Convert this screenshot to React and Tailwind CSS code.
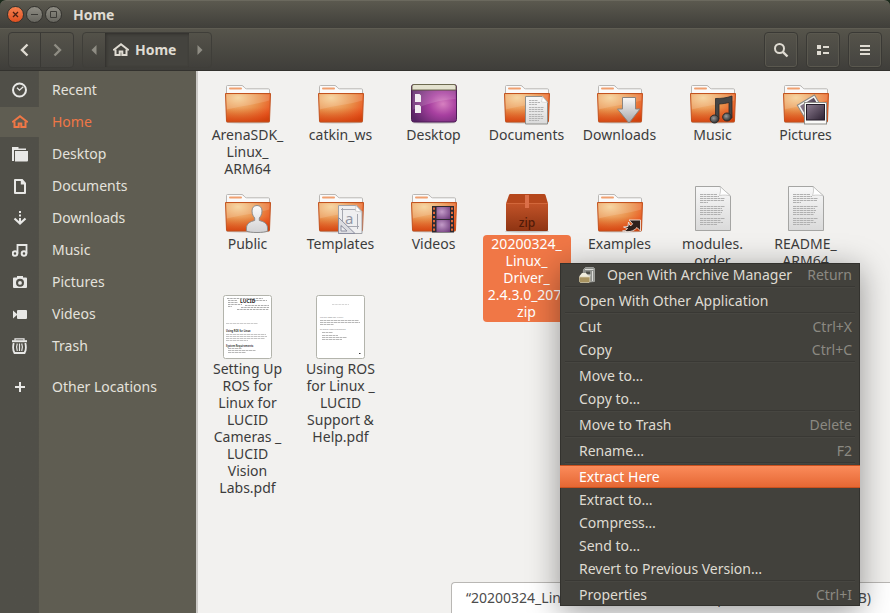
import { useState } from 'react';
import clsx from 'clsx';

const places = [
  { name: 'Recent', icon: 'recent' },
  { name: 'Home', icon: 'home' },
  { name: 'Desktop', icon: 'folder' },
  { name: 'Documents', icon: 'document' },
  { name: 'Downloads', icon: 'download' },
  { name: 'Music', icon: 'music' },
  { name: 'Pictures', icon: 'camera' },
  { name: 'Videos', icon: 'video' },
  { name: 'Trash', icon: 'trash' },
];

const files = [
  { lines: ['ArenaSDK_', 'Linux_', 'ARM64'], type: 'folder' },
  { lines: ['catkin_ws'], type: 'folder' },
  { lines: ['Desktop'], type: 'desktop' },
  { lines: ['Documents'], type: 'folder', emblem: 'document' },
  { lines: ['Downloads'], type: 'folder', emblem: 'download' },
  { lines: ['Music'], type: 'folder', emblem: 'music' },
  { lines: ['Pictures'], type: 'folder', emblem: 'pictures' },
  { lines: ['Public'], type: 'folder', emblem: 'person' },
  { lines: ['Templates'], type: 'folder', emblem: 'template' },
  { lines: ['Videos'], type: 'folder', emblem: 'film' },
  { lines: ['20200324_', 'Linux_', 'Driver_', '2.4.3.0_207.', 'zip'], type: 'zip' },
  { lines: ['Examples'], type: 'folder', emblem: 'link' },
  { lines: ['modules.', 'order'], type: 'text' },
  { lines: ['README_', 'ARM64'], type: 'text' },
  {
    lines: ['Setting Up', 'ROS for', 'Linux for', 'LUCID', 'Cameras _', 'LUCID', 'Vision', 'Labs.pdf'],
    type: 'pdfSetup',
  },
  { lines: ['Using ROS', 'for Linux _', 'LUCID', 'Support &', 'Help.pdf'], type: 'pdfUsing' },
];

const menuGroups = [
  [{ label: 'Open With Archive Manager', keys: 'Return', icon: true }],
  [{ label: 'Open With Other Application' }],
  [{ label: 'Cut', keys: 'Ctrl+X' }, { label: 'Copy', keys: 'Ctrl+C' }],
  [{ label: 'Move to…' }, { label: 'Copy to…' }],
  [{ label: 'Move to Trash', keys: 'Delete' }],
  [{ label: 'Rename…', keys: 'F2' }],
  [
    { label: 'Extract Here' },
    { label: 'Extract to…' },
    { label: 'Compress…' },
    { label: 'Send to…' },
    { label: 'Revert to Previous Version…' },
  ],
  [{ label: 'Properties', keys: 'Ctrl+I' }],
];

const HomeGlyph = () => (
  <svg className="h-4 w-4" viewBox="0 0 16 16" aria-hidden="true">
    <path d="M.3 8.300 8 2.300l7.700 6" fill="none" stroke="currentColor" strokeWidth="2" />
    <path d="M2.500 7.500V13h4.200V9.500h2.600V13h4.200V7.500" fill="none" stroke="currentColor" strokeWidth="2" />
  </svg>
);

const placeGlyphs = {
  recent: (
    <g fill="none" stroke="currentColor">
      <circle cx="7.500" cy="8" r="6.500" strokeWidth="2" />
      <path d="M5 5.800 7.500 8.200 11.300 4.800" strokeWidth="1.300" />
    </g>
  ),
  folder: (
    <>
      <path d="M0 1h6.500v1.500H14V4H2v11H0z" />
      <path d="M3 5h13v9.500a1 1 0 0 1-1 1H3z" />
    </>
  ),
  document: (
    <path fillRule="evenodd" d="M3 1h7.500L14 5v10a1 1 0 0 1-1 1H3a1 1 0 0 1-1-1V2a1 1 0 0 1 1-1zm1 2v11h8V6.500H8.800V3z" />
  ),
  download: (
    <>
      <path d="M7 1h2v2H7zM7 4.500h2v2H7zM7 8h2v5H7z" />
      <path d="M2.500 8.500 8 13.500l5.500-5" fill="none" stroke="currentColor" strokeWidth="2.200" />
    </>
  ),
  music: (
    <g fill="none" stroke="currentColor" strokeWidth="2">
      <circle cx="3" cy="11.500" r="2.300" />
      <circle cx="12" cy="11.500" r="2.300" />
      <path d="M5.500 11.500V3h9v8.500" strokeWidth="1.800" />
    </g>
  ),
  camera: (
    <path
      fillRule="evenodd"
      d="M5 2h6v1.500h3a1 1 0 0 1 1 1V13a1 1 0 0 1-1 1H2a1 1 0 0 1-1-1V4.500a1 1 0 0 1 1-1h3zM8 4.800a4 4 0 1 0 0 8 4 4 0 0 0 0-8zm0 2.200a1.900 1.900 0 1 1 0 3.800 1.900 1.900 0 0 1 0-3.800z"
    />
  ),
  video: <path d="M1 4.500 5 8V5a1 1 0 0 1 1-1h8a1 1 0 0 1 1 1v7a1 1 0 0 1-1 1H6a1 1 0 0 1-1-1V9l-4 3.500z" />,
  trash: (
    <g fill="none" stroke="currentColor">
      <path d="M0 3.200h15" strokeWidth="2" />
      <path d="M3 2.500V.8h9v1.700" strokeWidth="1.300" />
      <path d="M1.700 5C.8 8.500.8 12 2.500 15h10c1.700-3 1.700-6.500.8-10" strokeWidth="1.800" />
      <path d="M5.300 5.500c-1 2.500-1 5 0 7.500M7.500 5.500V13M9.700 5.500c1 2.500 1 5 0 7.500" strokeWidth="1.200" />
    </g>
  ),
  add: <path d="M7 3h2v4h4v2H9v4H7V9H3V7h4z" />,
};

const PlaceLink = ({ name, icon, active, onSelect }) => (
  <a href="#" onClick={onSelect} className="flex h-8 shrink-0 items-center">
    <span
      className={clsx(
        'flex h-[30px] w-[39px] items-center justify-center',
        active ? 'bg-[#5f5d52] text-[#f07746]' : 'text-[#e8e8e6]'
      )}
    >
      {icon === 'home' ? (
        <HomeGlyph />
      ) : (
        <svg className="h-4 w-4" viewBox="0 0 16 16" fill="currentColor" aria-hidden="true">
          {placeGlyphs[icon]}
        </svg>
      )}
    </span>
    <span className={clsx('pb-[2px] pl-[13px]', active ? 'text-[#f07746]' : 'text-[#e4e2dc]')}>{name}</span>
  </a>
);

// Gradients shared by all the file icons
const IconDefs = () => (
  <svg className="absolute h-0 w-0" aria-hidden="true">
    <defs>
      <radialGradient id="folderFront" cx="0.28" cy="0.15" r="1">
        <stop offset="0" stopColor="#f5cf94" />
        <stop offset="0.5" stopColor="#e98f4a" />
        <stop offset="0.85" stopColor="#ea5520" />
        <stop offset="1" stopColor="#d9420f" />
      </radialGradient>
      <linearGradient id="folderShade" x1="0" y1="0" x2="0" y2="1">
        <stop offset="0.5" stopColor="#d04a10" stopOpacity="0" />
        <stop offset="1" stopColor="#c8400c" stopOpacity="0.600" />
      </linearGradient>
      <linearGradient id="paper" x1="0" y1="0" x2="0" y2="1">
        <stop offset="0" stopColor="#f8f8f8" />
        <stop offset="1" stopColor="#dadada" />
      </linearGradient>
      <linearGradient id="silver" x1="0" y1="0" x2="0" y2="1">
        <stop offset="0" stopColor="#fafafa" />
        <stop offset="1" stopColor="#a5a5a8" />
      </linearGradient>
      <linearGradient id="bust" x1="0" y1="0" x2="0" y2="1">
        <stop offset="0" stopColor="#fbfbfb" />
        <stop offset="1" stopColor="#d2d2d4" />
      </linearGradient>
      <radialGradient id="desktopFill" cx="0.7" cy="0.52" r="0.75">
        <stop offset="0" stopColor="#d780c0" />
        <stop offset="0.4" stopColor="#a840a0" />
        <stop offset="1" stopColor="#562364" />
      </radialGradient>
      <linearGradient id="photo" x1="0" y1="0" x2="1" y2="1">
        <stop offset="0" stopColor="#8d7d90" />
        <stop offset="1" stopColor="#2c2132" />
      </linearGradient>
      <radialGradient id="filmFrame" cx="0.4" cy="0.4" r="0.8">
        <stop offset="0" stopColor="#c39bc8" />
        <stop offset="1" stopColor="#6e3a7c" />
      </radialGradient>
      <linearGradient id="boxFront" x1="0" y1="0" x2="0" y2="1">
        <stop offset="0" stopColor="#c25328" />
        <stop offset="1" stopColor="#8e3413" />
      </linearGradient>
      <radialGradient id="noteHead" cx="0.4" cy="0.4" r="0.6">
        <stop offset="0" stopColor="#9a9a9a" />
        <stop offset="1" stopColor="#303030" />
      </radialGradient>
    </defs>
  </svg>
);

const emblems = {
  document: (
    <>
      <path d="M22.500 18.500h17l5 5.500v22h-22z" fill="url(#paper)" stroke="#8f8f8b" />
      <path d="M39.500 18.500 38.500 24l6 .5z" fill="#fff" stroke="#c6c6c4" strokeWidth="0.600" />
      <path d="M26 22.500h9M26 24.500h11M26 26.500h8M26 29.500h15M26 31.500h14M26 33.500h15M26 36.500h13M26 38.500h15M26 40.500h14M26 42.500h10" stroke="#b4b4b4" strokeDasharray="2.500 0.500" />
    </>
  ),
  download: <path d="M26.500 19.500h13V31h4.500L33 45 21.500 31h5z" fill="url(#silver)" stroke="#8b8580" strokeLinejoin="round" />,
  music: (
    <>
      <path d="M26.500 20.500c6 0 11-.5 16.500-2.500v22h-3V24.500c-3 .8-6 1.300-10 1.500v15h-3.500z" fill="#454545" stroke="#2a2a2a" strokeWidth="0.800" />
      <ellipse cx="25.500" cy="41" rx="4.300" ry="4" fill="url(#noteHead)" stroke="#2c2c2c" />
      <ellipse cx="38" cy="39" rx="4.300" ry="4" fill="url(#noteHead)" stroke="#2c2c2c" />
    </>
  ),
  pictures: (
    <>
      <g transform="rotate(-31 28 29)">
        <rect x="18" y="21" width="20" height="19" fill="#f5f5f3" stroke="#8a8a86" />
        <rect x="20" y="23" width="16" height="14" fill="url(#photo)" />
      </g>
      <rect x="22.500" y="24.500" width="22" height="21.500" fill="#fbfbf9" stroke="#8f8f8a" />
      <rect x="24.500" y="26.500" width="18" height="15.500" fill="url(#photo)" stroke="#241c29" />
    </>
  ),
  person: (
    <path
      d="M33 18.500c-3.300 0-5 2.300-5 5.500 0 3.500 1.500 5.500 2.700 7v2.500c-4.500 1-8.200 3-8.200 7.500v3c3 2 18 2 21 0v-3c0-4.500-3.700-6.500-8.200-7.500V31c1.200-1.500 2.700-3.500 2.700-7 0-3.200-1.700-5.500-5-5.500z"
      fill="url(#bust)"
      stroke="#8d8d8d"
    />
  ),
  template: (
    <>
      <path d="M21.500 18.500h18l5.500 6V46.500H21.500z" fill="#efeff0" stroke="#a1a3a8" />
      <path d="M24 22.500h15M24 39.500h18M25.500 21v19M40.500 27v15" stroke="#a6a8b0" fill="none" />
      <path d="M39 18.500 38.500 24l6 1z" fill="#fff" stroke="#b9b9b9" strokeWidth="0.600" />
      <text x="28" y="37" fontSize="15" fill="#9296a4" fontFamily="Noto Sans, sans-serif">a</text>
      <path fillRule="evenodd" d="M21.500 30.500 38 46.500H21.500zM24 38.500v5.500h6z" fill="#dcdde1" stroke="#8d90a0" />
    </>
  ),
  film: (
    <>
      <rect x="22" y="19" width="22" height="26.500" fill="#2e2a30" />
      <path d="M24 20.500v25M42 20.500v25" stroke="#e0693a" strokeWidth="2" strokeDasharray="2.200 2" />
      <rect x="26.500" y="20" width="13.500" height="12" fill="url(#filmFrame)" />
      <rect x="26.500" y="33" width="13.500" height="12" fill="url(#filmFrame)" />
    </>
  ),
  link: (
    <path
      d="M33 33h11.500v11l-3.500-3.500C37.500 44.500 33 45.500 26.500 44c2.500-.2 4-1 5-2.500l-4-1.500 4.500-.5.5-4.500 1.500 3.500c1.200 0 2-.6 2.600-1.600z"
      fill="#2d201c"
      stroke="#f2e7e0"
      strokeWidth="0.900"
    />
  ),
};

const FolderIcon = ({ emblem }) => (
  <svg className="h-12 w-12" viewBox="0 0 48 48" aria-hidden="true">
    <ellipse cx="24" cy="44.500" rx="22" ry="1" fill="#000" opacity="0.180" />
    <path d="M2.500 16V8.500a1 1 0 0 1 1-1h14.500c1.500 0 2.500 3.300 4.500 3.300h22a1 1 0 0 1 1 1V16z" fill="#fafafa" stroke="#b9b7b4" />
    <rect x="5" y="9.500" width="13" height="2" rx="1" fill="#f0a070" />
    <path d="M1.500 15.500h45L45.500 43a1 1 0 0 1-1 1h-41a1 1 0 0 1-1-1z" fill="url(#folderFront)" />
    <path d="M1.500 15.500h45L45.500 43a1 1 0 0 1-1 1h-41a1 1 0 0 1-1-1z" fill="url(#folderShade)" stroke="#c2521f" />
    <path d="M2.500 16.500h43l-.3 6C34 26 16 28 2.800 31.500z" fill="#fff" opacity="0.140" />
    {emblems[emblem]}
  </svg>
);

const DesktopIcon = () => (
  <svg className="h-12 w-12" viewBox="0 0 48 48" aria-hidden="true">
    <ellipse cx="24" cy="44.800" rx="22" ry="1" fill="#000" opacity="0.180" />
    <rect x="1.500" y="6.500" width="45" height="37.500" rx="2.500" fill="url(#desktopFill)" stroke="#4f1c56" />
    <path d="M2 12V8.500a2 2 0 0 1 2-2h40a2 2 0 0 1 2 2V12z" fill="#e4e2cf" stroke="#6d6a50" />
    <path d="M2.500 13h43v8C30 22 15 26 2.500 32z" fill="#fff" opacity="0.140" />
    <path d="M5 16h4.500l1.500 1.500V24H5zM5 27h4.500l1.500 1.500V35H5z" fill="#f1ecf2" />
  </svg>
);

const ZipIcon = () => (
  <svg className="h-12 w-12" viewBox="0 0 48 48" aria-hidden="true">
    <ellipse cx="24" cy="44.500" rx="22" ry="1" fill="#000" opacity="0.200" />
    <path d="M7.500 7h33.500a1.500 1.500 0 0 1 1.500 1L45 16.500H3L6 8a1.500 1.500 0 0 1 1.500-1z" fill="#b5471c" />
    <path d="M3 16h42v27a1 1 0 0 1-1 1H4a1 1 0 0 1-1-1z" fill="url(#boxFront)" />
    <path d="M3 16.500h42" stroke="#d2673b" />
    <path d="M22 8h4v13h-4z" fill="#db6f48" />
    <text x="24" y="40" fontSize="12" textAnchor="middle" fill="#501a08" fontFamily="Noto Sans, sans-serif" fontWeight="500">
      zip
    </text>
  </svg>
);

const TextIcon = () => (
  <svg className="h-12 w-12 overflow-visible" viewBox="0 1 48 48" aria-hidden="true">
    <path d="M6.500.5H31l10.500 9.500v34.500h-35z" fill="url(#paper)" stroke="#a5a5a3" />
    <path d="M31 .5c1 3 .5 6-.5 9 4-.8 8-.5 11 .5z" fill="#fff" stroke="#bdbdbb" strokeWidth="0.700" />
    <path
      d="M11 8.500h17M11 10.500h19M11 12.500h25M11 14.500h24M11 16.500h8M11 20.500h25M11 22.500h22M11 24.500h23M11 26.500h22M11 28.500h21M11 32.500h25M11 34.500h21M11 36.500h23M11 38.500h17"
      stroke="#b0b0b0"
      strokeDasharray="3 0.500"
    />
  </svg>
);

const PdfSetupThumb = () => (
  <svg className="h-16 w-[50px] overflow-visible" viewBox="0 1 50 64" aria-hidden="true">
    <rect x="0.500" y="0.500" width="48" height="63" rx="2" fill="#fff" stroke="#b3b4ac" />
    <path d="M4 3.500h36M5 5.500h9M5 7.500h10M5 9.500h14M5 11.500h4M30 5.500h14M22 10.500h24M18 12.500h28M14 14.500h32" stroke="#777" strokeWidth="0.600" strokeDasharray="2.500 0.700" />
    <text x="17" y="8" fontSize="5" fontWeight="700" fill="#222" fontFamily="Noto Sans, sans-serif">LUCID</text>
    <path d="M3 28.500h32" stroke="#aaa" strokeWidth="0.600" strokeDasharray="3 0.500" />
    <text x="3" y="36.500" fontSize="2.500" fontWeight="700" fill="#333" fontFamily="Noto Sans, sans-serif">Using ROS for Linux</text>
    <path d="M3 39.500h40M3 41.500h41M3 43.500h39M3 45.500h22" stroke="#aaa" strokeWidth="0.700" strokeDasharray="3 0.500" />
    <text x="3" y="51.500" fontSize="2.500" fontWeight="700" fill="#444" fontFamily="Noto Sans, sans-serif">System Requirements</text>
    <path d="M5 53.500h14M5 55.500h28M5 57.500h18" stroke="#999" strokeWidth="0.700" strokeDasharray="3 0.500" />
  </svg>
);

const PdfUsingThumb = () => (
  <svg className="h-16 w-[50px] overflow-visible" viewBox="0 1 50 64" aria-hidden="true">
    <rect x="0.500" y="0.500" width="48" height="63" rx="2" fill="#fff" stroke="#b3b4ac" />
    <path d="M16 9.500h17" stroke="#ccc" strokeWidth="0.800" strokeDasharray="2.500 0.700" />
    <text x="4" y="23" fontSize="2.500" fill="#888" fontFamily="Noto Sans, sans-serif">Using ROS for Linux</text>
    <path d="M4 25.500h39M4 27.500h40M4 29.500h14" stroke="#999" strokeWidth="0.700" strokeDasharray="3 0.500" />
    <text x="4" y="35" fontSize="2.500" fill="#888" fontFamily="Noto Sans, sans-serif">System Requirements</text>
    <path d="M6 37.500h11M6 40.500h16M6 42.500h25M6 44.500h20" stroke="#999" strokeWidth="0.700" strokeDasharray="3 0.500" />
    <path d="M43 58.500h1.500" stroke="#333" />
  </svg>
);

const fileIcons = {
  folder: FolderIcon,
  desktop: DesktopIcon,
  zip: ZipIcon,
  text: TextIcon,
  pdfSetup: PdfSetupThumb,
  pdfUsing: PdfUsingThumb,
};

const FileItem = ({ file, selected, onSelect }) => {
  const Icon = fileIcons[file.type];
  return (
    <button type="button" onClick={onSelect} className="flex flex-col items-center">
      <Icon emblem={file.emblem} />
      <span
        className={clsx(
          'w-[88px] rounded pb-[2px] text-center leading-[17px]',
          selected ? 'bg-[#f07746] text-white' : 'text-[#3c3c3c]'
        )}
      >
        {file.lines.map((line, i) => (
          <span key={i} className="block whitespace-nowrap">
            {line}
          </span>
        ))}
      </span>
    </button>
  );
};

const ArchiveIcon = () => (
  <svg className="h-4 w-4" viewBox="0 0 16 16" aria-hidden="true">
    <path d="M4.500 2.500 6.500.5h8l1 1V14.500l-5 .5L4 9z" fill="#8f918d" stroke="#b4b6b2" strokeWidth="0.700" />
    <path d="M6 2.500h8.500M13.500 4v10" stroke="#dcdcd8" />
    <path d="M7 4.500h4v3H7z" fill="#4b4d47" />
    <path d="M8 7.500h4l-1 3H8z" fill="#c9cac6" />
    <path d="M.5 9 3 6h4l2 2.500 1.500.5v1.500H.5z" fill="#efecdc" />
    <path d="M.3 10h10.500v4.500l-.8 1H1.300l-1-1z" fill="#a8935f" stroke="#ddd3b4" strokeWidth="0.700" />
  </svg>
);

const ContextMenu = () => (
  <div
    role="menu"
    className="absolute top-[263px] right-[30px] w-[300px] bg-[#42413c] text-[#dfdbd2] shadow-[0_6px_30px_rgba(0,0,0,0.4)] ring-1 ring-[#33322e] ring-inset"
  >
    {menuGroups.map((group, g) => (
      <div key={g}>
        {g > 0 && <div className="mx-[5px] h-[3px] border-t border-[#393834] shadow-[inset_0_1px_0_#474641]" />}
        {group.map((item) => (
          <button
            key={item.label}
            type="button"
            role="menuitem"
            className={clsx(
              'flex h-[23px] w-full items-center pr-2 pl-[19px] leading-[23px]',
              item.label === 'Extract Here' &&
                'border-y border-[#c9511f] bg-linear-to-b from-[#fb8b5a] to-[#e56733] text-white'
            )}
          >
            {item.icon && (
              <span className="mr-3">
                <ArchiveIcon />
              </span>
            )}
            <span className="whitespace-nowrap">{item.label}</span>
            <span className="ml-auto text-[#8b8982]">{item.keys}</span>
          </button>
        ))}
      </div>
    ))}
  </div>
);

const ToolButton = ({ label, children }) => (
  <button
    type="button"
    aria-label={label}
    className="flex h-9 w-[34px] items-center justify-center rounded border border-[#3a3935] bg-linear-to-b from-[#55534a] to-[#454440] shadow-[inset_0_0_0_1px_#5a584f]"
  >
    <svg className="h-4 w-4" viewBox="0 0 16 16" fill="currentColor" aria-hidden="true">
      {children}
    </svg>
  </button>
);

const TitleBar = () => (
  <div className="flex h-7 shrink-0 items-center rounded-t-md border-t border-[#6b695e] bg-linear-to-b from-[#5b594f] to-[#403f3a] pl-[7px]">
    <div className="flex gap-[2px]">
      <button type="button" aria-label="Close" className="flex h-[17px] w-[17px] items-center justify-center rounded-full border border-[#33322e] bg-linear-to-b from-[#f5814f] to-[#df4f1f]">
        <svg className="h-[15px] w-[15px]" viewBox="0 0 15 15" stroke="#4a2012" strokeWidth="1.300" aria-hidden="true">
          <path d="m5 5 5 5M10 5l-5 5" />
        </svg>
      </button>
      <button type="button" aria-label="Minimize" className="flex h-[17px] w-[17px] items-center justify-center rounded-full border border-[#33322e] bg-linear-to-b from-[#8f8d84] to-[#67665f]">
        <svg className="h-[15px] w-[15px]" viewBox="0 0 15 15" stroke="#3c3b37" aria-hidden="true">
          <path d="M4 7.500h7" />
        </svg>
      </button>
      <button type="button" aria-label="Maximize" className="flex h-[17px] w-[17px] items-center justify-center rounded-full border border-[#33322e] bg-linear-to-b from-[#8f8d84] to-[#67665f]">
        <svg className="h-[15px] w-[15px]" viewBox="0 0 15 15" fill="none" stroke="#3c3b37" aria-hidden="true">
          <path d="M4.500 4.500h6v6h-6z" />
        </svg>
      </button>
    </div>
    <h1 className="pl-[11px] font-bold text-[#dfdbd2]">Home</h1>
  </div>
);

const Toolbar = () => (
  <div className="flex h-[43px] shrink-0 items-center gap-2 border-t border-b border-t-[#5f5d53] border-b-[#33322e] bg-linear-to-b from-[#56544b] to-[#3f3e3a] px-2 text-[#dfdbd2]">
    <div className="flex h-9 overflow-hidden rounded border border-[#3c3b37] bg-linear-to-b from-[#55534a] to-[#454440]">
      <button type="button" aria-label="Back" className="flex w-8 items-center justify-center border-r border-[#3a3935]">
        <svg className="h-4 w-4" viewBox="0 0 16 16" fill="none" stroke="currentColor" strokeWidth="2.400" aria-hidden="true">
          <path d="M10.500 2.500 5 8l5.500 5.500" />
        </svg>
      </button>
      <button type="button" aria-label="Forward" className="flex w-8 items-center justify-center text-[#8f8d84]">
        <svg className="h-4 w-4" viewBox="0 0 16 16" fill="none" stroke="currentColor" strokeWidth="2.400" aria-hidden="true">
          <path d="M5.500 2.500 11 8l-5.500 5.500" />
        </svg>
      </button>
    </div>
    <div className="flex h-9 overflow-hidden rounded border border-[#3f3e39]">
      <button type="button" aria-label="Scroll path left" className="flex w-[22px] items-center justify-center text-[#8f8d84]">
        <svg className="h-[10px] w-[6px]" viewBox="0 0 6 10" fill="currentColor" aria-hidden="true">
          <path d="M5.500 0v10L.5 5z" />
        </svg>
      </button>
      <button type="button" className="flex w-[84px] items-center gap-[6px] bg-[#44433e] pl-2 font-bold shadow-[inset_1px_1px_3px_#2f2e2a]">
        <HomeGlyph />
        Home
      </button>
      <button type="button" aria-label="Scroll path right" className="flex w-[22px] items-center justify-center text-[#8f8d84]">
        <svg className="h-[10px] w-[6px]" viewBox="0 0 6 10" fill="currentColor" aria-hidden="true">
          <path d="M.5 0v10l5-5z" />
        </svg>
      </button>
    </div>
    <div className="ml-auto flex gap-2">
      <ToolButton label="Search">
        <circle cx="6.500" cy="6.500" r="4.500" fill="none" stroke="currentColor" strokeWidth="2" />
        <path d="m9.800 9.800 4.700 4.700" stroke="currentColor" strokeWidth="2.400" />
      </ToolButton>
      <ToolButton label="View as list">
        <path d="M2 3h4v4H2zM2 9h4v4H2zM8 4h6v2H8zM8 10h6v2H8z" />
      </ToolButton>
      <ToolButton label="Menu">
        <path d="M3 3h10v2H3zM3 7h10v2H3zM3 11h10v2H3z" />
      </ToolButton>
    </div>
  </div>
);

const App = () => {
  const [place, setPlace] = useState('Home');
  const [selected, setSelected] = useState(10);

  return (
    <div className="relative flex h-screen flex-col overflow-hidden bg-[#1c2a1c] font-['Noto_Sans',sans-serif] text-[14px]">
      <IconDefs />
      <TitleBar />
      <Toolbar />

      <div className="flex min-h-0 flex-1">
        {/* Places */}
        <nav className="flex w-[198px] shrink-0 flex-col border-r-2 border-[#cbc9c6] bg-linear-to-r from-[#504f48] from-[38px] via-[#45443e] via-[38px] to-[#5f5d52] to-[39px] pt-[3px]">
          {places.map((item) => (
            <PlaceLink key={item.name} {...item} active={item.name === place} onSelect={() => setPlace(item.name)} />
          ))}
          <div className="mt-[9px]">
            <PlaceLink name="Other Locations" icon="add" />
          </div>
        </nav>

        {/* Files */}
        <main className="relative flex-1 bg-[#f2f1ef]">
          <div className="grid auto-rows-[99px] grid-cols-[repeat(auto-fill,93px)] items-start gap-y-[10px] pt-[7px] pl-[3px]">
            {files.map((file, i) => (
              <FileItem key={i} file={file} selected={i === selected} onSelect={() => setSelected(i)} />
            ))}
          </div>
          <div
            role="status"
            className="absolute right-0 bottom-0 flex h-[31px] min-w-[439px] justify-between rounded-tl border-t border-l border-[#b9b7b4] bg-white pr-[19px] pl-[14px] leading-[29px] whitespace-nowrap text-[#4c4c4c]"
          >
            <span>“20200324_Linux_Driver_2.4.3.0_207.zip” selected</span>
            <span>(237.4 MB)</span>
          </div>
        </main>
      </div>

      <ContextMenu />
    </div>
  );
};

export default App;
